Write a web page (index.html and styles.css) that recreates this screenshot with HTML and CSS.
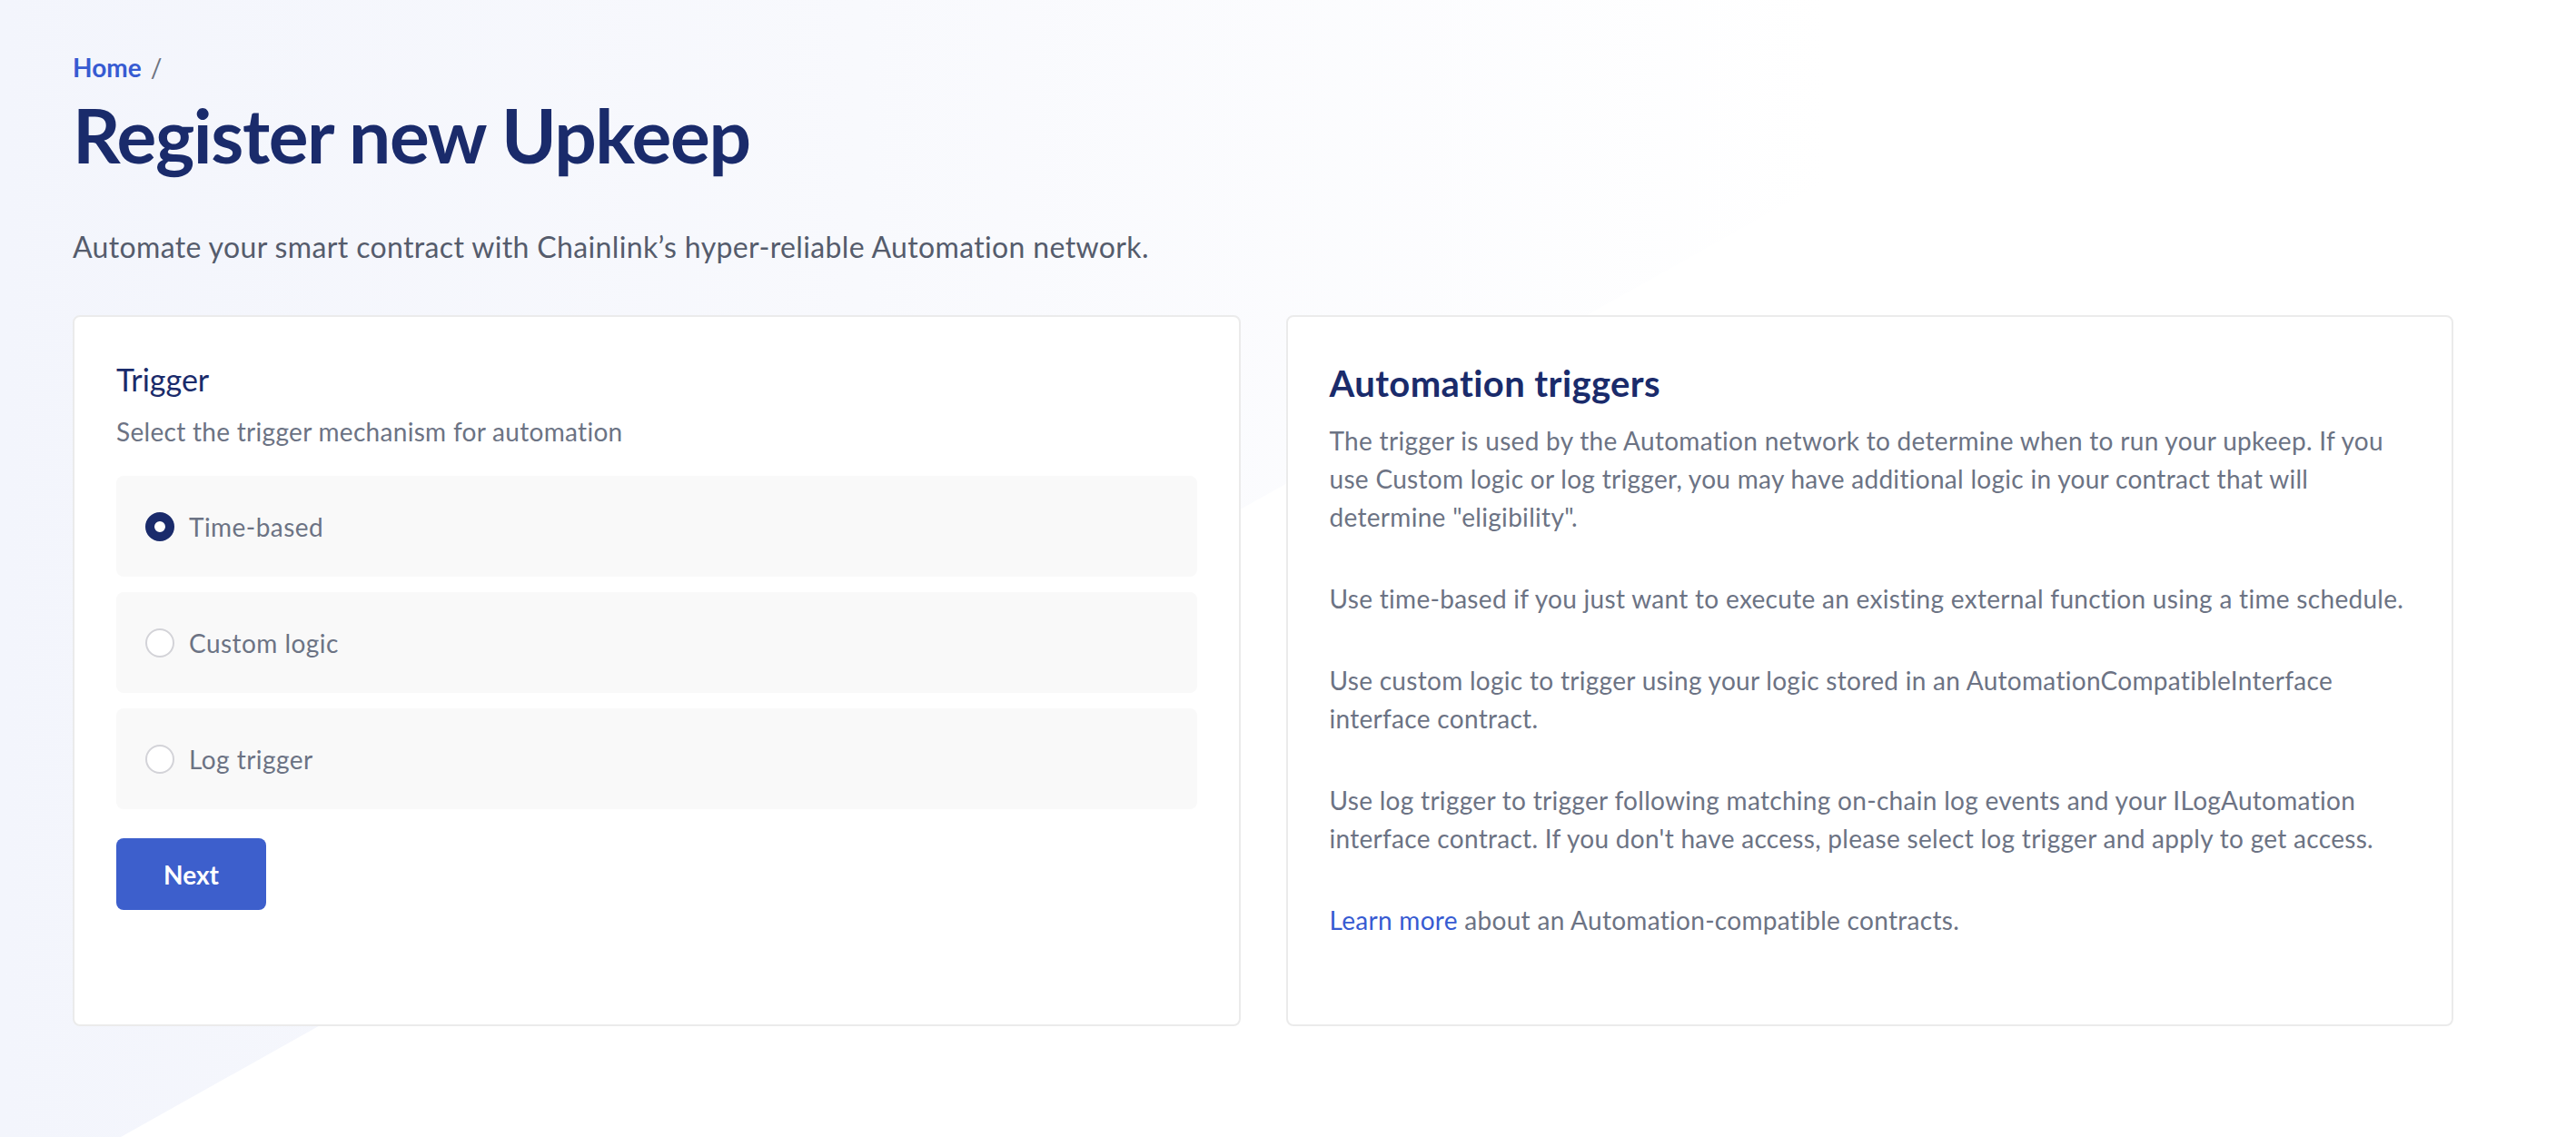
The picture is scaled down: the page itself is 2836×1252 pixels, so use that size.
FILE: index.html
```html
<!DOCTYPE html>
<html lang="en">
<head>
<meta charset="utf-8">
<title>Register new Upkeep</title>
<link rel="stylesheet" href="styles.css">
</head>
<body>
<div class="bg-shape"></div>
<main class="page">
  <nav class="breadcrumb"><a href="#" class="crumb-link">Home</a><span class="crumb-sep">/</span></nav>
  <h1 class="page-title">Register new Upkeep</h1>
  <p class="page-desc">Automate your smart contract with Chainlink’s hyper-reliable Automation network.</p>
  <div class="columns">
    <section class="card form-card">
      <h2 class="card-label">Trigger</h2>
      <p class="card-hint">Select the trigger mechanism for automation</p>
      <div class="options">
        <label class="option"><span class="radio radio-checked"></span><span class="option-text">Time-based</span></label>
        <label class="option"><span class="radio"></span><span class="option-text">Custom logic</span></label>
        <label class="option"><span class="radio"></span><span class="option-text">Log trigger</span></label>
      </div>
      <button class="btn-primary" type="button">Next</button>
    </section>
    <aside class="card info-card">
      <h2 class="info-title">Automation triggers</h2>
      <p class="info-text">The trigger is used by the Automation network to determine when to run your upkeep. If you use Custom logic or log trigger, you may have additional logic in your contract that will determine "eligibility".</p>
      <p class="info-text">Use time-based if you just want to execute an existing external function using a time schedule.</p>
      <p class="info-text">Use custom logic to trigger using your logic stored in an AutomationCompatibleInterface interface contract.</p>
      <p class="info-text">Use log trigger to trigger following matching on-chain log events and your ILogAutomation interface contract. If you don't have access, please select log trigger and apply to get access.</p>
      <p class="info-text"><a href="#" class="text-link">Learn more</a> about an Automation-compatible contracts.</p>
    </aside>
  </div>
</main>
</body>
</html>
```

FILE: styles.css
```css
* { box-sizing: border-box; }
html, body { margin: 0; padding: 0; }
body {
  font-family: Lato, "Open Sans", sans-serif;
  background: #ffffff;
  color: #6c7384;
  position: relative;
  height: 1252px;
  overflow: hidden;
}
.bg-shape {
  position: absolute;
  top: 0;
  left: 0;
  width: 2366px;
  height: 1252px;
  clip-path: polygon(0 0, 100% 0, 133px 100%, 0 100%);
  background: linear-gradient(90deg, #f3f5fc 0%, #f8f9fd 40%, #ffffff 85%);
  z-index: 0;
}
.page {
  position: relative;
  z-index: 1;
  width: 2621px;
  margin-left: 80px;
  padding-top: 54px;
}
.breadcrumb { font-size: 28px; line-height: 40px; height: 40px; }
.crumb-link { color: #375bd2; font-weight: 700; text-decoration: none; }
.crumb-sep { color: #6d7380; margin-left: 10px; }
.page-title {
  margin: 4px 0 0;
  font-size: 82px;
  line-height: 100px;
  font-weight: 700;
  letter-spacing: -1.4px;
  color: #1a2b6b;
}
.page-desc {
  margin: 50px 0 0;
  font-size: 32px;
  line-height: 48px;
  letter-spacing: 0.36px;
  color: #555c6c;
}
.columns {
  display: grid;
  grid-template-columns: 1fr 1fr;
  gap: 50px;
  margin-top: 51px;
}
.card {
  background: #ffffff;
  border: 2px solid #ebebeb;
  border-radius: 8px;
  padding: 45px 46px 46px;
}
.card-label {
  margin: 0;
  font-size: 34px;
  line-height: 48px;
  font-weight: 400;
  color: #1a2b6b;
}
.card-hint { margin: 12px 0 0; font-size: 28px; line-height: 42px; letter-spacing: 0.3px; }
.options { margin-top: 28px; display: flex; flex-direction: column; gap: 17px; }
.option {
  height: 111px;
  display: flex;
  align-items: center;
  gap: 16px;
  padding: 0 32px;
  background: #f9f9f9;
  border-radius: 8px;
}
.radio {
  width: 32px;
  height: 32px;
  border-radius: 50%;
  border: 2px solid #d3d3d8;
  background: #ffffff;
  flex: none;
}
.radio-checked { border: 10px solid #1a2b6b; }
.option-text { font-size: 28px; line-height: 42px; letter-spacing: 0.45px; color: #6c7384; }
.btn-primary {
  margin-top: 32px;
  width: 165px;
  height: 79px;
  border: 0;
  border-radius: 8px;
  background: #3d5fcc;
  color: #ffffff;
  font-family: inherit;
  font-size: 28px;
  font-weight: 700;
}
.info-title {
  margin: 0 0 14px;
  font-size: 40px;
  line-height: 56px;
  font-weight: 700;
  letter-spacing: 0.4px;
  color: #1a2b6b;
}
.info-text { margin: 0 0 48px; font-size: 28px; line-height: 42px; letter-spacing: 0.3px; }
.text-link { color: #375bd2; text-decoration: none; }
```
